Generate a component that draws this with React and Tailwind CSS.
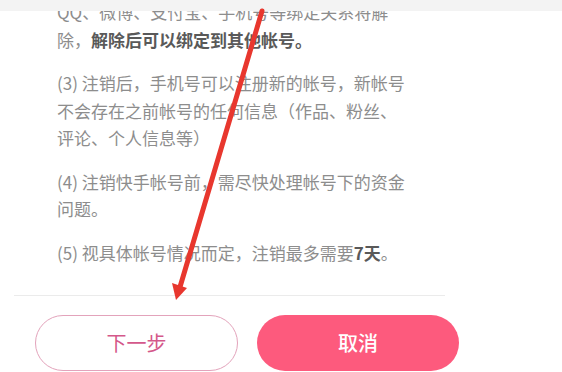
import React from "react";

function Arrow() {
  return (
    <svg
      className="absolute left-0 top-0 pointer-events-none"
      width="562"
      height="372"
      viewBox="0 0 562 372"
    >
      <line x1="262" y1="11" x2="180" y2="287" stroke="#e8372e" strokeWidth="5" strokeLinecap="round" />
      <polygon points="176,300 187,288 172,283" fill="#e8372e" />
    </svg>
  );
}

export default function App() {
  const font = { fontFamily: '"Noto Sans CJK SC", "Noto Sans", sans-serif' };
  return (
    <div className="relative w-[562px] h-[372px] bg-white overflow-hidden" style={font}>
      <div className="h-[11px] w-full bg-[#f3f3f3]" />
      <div className="h-[284px] overflow-hidden pl-[57px]">
        <div className="-mt-[13px] text-[17px] leading-[27.5px] text-[#8d8d8d] whitespace-nowrap">
          <p>QQ、微博、支付宝、手机号等绑定关系将解</p>
          <p>
            除，<span className="font-bold text-[#595959]">解除后可以绑定到其他帐号。</span>
          </p>
          <p className="mt-[16px]">(3) 注销后，手机号可以注册新的帐号，新帐号</p>
          <p>不会存在之前帐号的任何信息（作品、粉丝、</p>
          <p>评论、个人信息等）</p>
          <p className="mt-[16px]">(4) 注销快手帐号前，需尽快处理帐号下的资金</p>
          <p>问题。</p>
          <p className="mt-[16px]">
            (5) 视具体帐号情况而定，注销最多需要<span className="font-bold text-[#595959]">7天</span>。
          </p>
        </div>
      </div>
      <div className="ml-[14px] w-[431px] h-px bg-[#ebebeb]" />
      <div className="mt-[19px] flex gap-[19px] pl-[35px]">
        <button className="w-[203px] h-[56px] rounded-full border-[1.5px] border-[#e3a3bb] bg-white text-[20px] text-[#d4588a] flex items-center justify-center">
          下一步
        </button>
        <button className="w-[202px] h-[56px] rounded-full bg-[#fd5a7d] text-[20px] font-medium text-white flex items-center justify-center">
          取消
        </button>
      </div>
      <Arrow />
    </div>
  );
}
